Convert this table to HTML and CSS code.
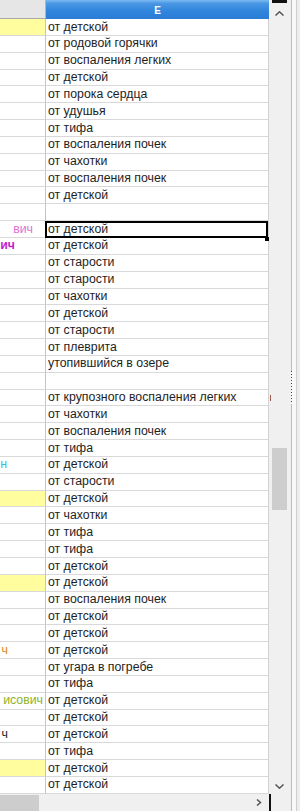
FILE: index.html
```html
<!DOCTYPE html>
<html lang="ru">
<head>
<meta charset="utf-8">
<title>Лист</title>
<link rel="stylesheet" href="styles.css">
</head>
<body>
<div class="main">
  <div class="head">
    <div class="head-d"></div>
    <div class="head-e">E</div>
  </div>
  <div class="rows">
    <div class="row"><div class="d y"></div><div class="e">от детской</div></div>
    <div class="row"><div class="d"></div><div class="e">от родовой горячки</div></div>
    <div class="row"><div class="d"></div><div class="e">от воспаления легких</div></div>
    <div class="row"><div class="d"></div><div class="e">от детской</div></div>
    <div class="row"><div class="d"></div><div class="e">от порока сердца</div></div>
    <div class="row"><div class="d"></div><div class="e">от удушья</div></div>
    <div class="row"><div class="d"></div><div class="e">от тифа</div></div>
    <div class="row"><div class="d"></div><div class="e">от воспаления почек</div></div>
    <div class="row"><div class="d"></div><div class="e">от чахотки</div></div>
    <div class="row"><div class="d"></div><div class="e">от воспаления почек</div></div>
    <div class="row"><div class="d"></div><div class="e">от детской</div></div>
    <div class="row"><div class="d"></div><div class="e"></div></div>
    <div class="row"><div class="d"><span class="n pink">вич</span></div><div class="e sel">от детской</div></div>
    <div class="row"><div class="d"><span class="n magenta">ич</span></div><div class="e">от детской</div></div>
    <div class="row"><div class="d"></div><div class="e">от старости</div></div>
    <div class="row"><div class="d"></div><div class="e">от старости</div></div>
    <div class="row"><div class="d"></div><div class="e">от чахотки</div></div>
    <div class="row"><div class="d"></div><div class="e">от детской</div></div>
    <div class="row"><div class="d"></div><div class="e">от старости</div></div>
    <div class="row"><div class="d"></div><div class="e">от плеврита</div></div>
    <div class="row"><div class="d"></div><div class="e">утопившийся в озере</div></div>
    <div class="row"><div class="d"></div><div class="e"></div></div>
    <div class="row"><div class="d"></div><div class="e">от крупозного воспаления легких<span class="mark"></span></div></div>
    <div class="row"><div class="d"></div><div class="e">от чахотки</div></div>
    <div class="row"><div class="d"></div><div class="e">от воспаления почек</div></div>
    <div class="row"><div class="d"></div><div class="e">от тифа</div></div>
    <div class="row"><div class="d"><span class="n cyan">н</span></div><div class="e">от детской</div></div>
    <div class="row"><div class="d"></div><div class="e">от старости</div></div>
    <div class="row"><div class="d y"></div><div class="e">от детской</div></div>
    <div class="row"><div class="d"></div><div class="e">от чахотки</div></div>
    <div class="row"><div class="d"></div><div class="e">от тифа</div></div>
    <div class="row"><div class="d"></div><div class="e">от тифа</div></div>
    <div class="row"><div class="d"></div><div class="e">от детской</div></div>
    <div class="row"><div class="d y"></div><div class="e">от детской</div></div>
    <div class="row"><div class="d"></div><div class="e">от воспаления почек</div></div>
    <div class="row"><div class="d"></div><div class="e">от детской</div></div>
    <div class="row"><div class="d"></div><div class="e">от детской</div></div>
    <div class="row"><div class="d"><span class="n orange">ч</span></div><div class="e">от детской</div></div>
    <div class="row"><div class="d"></div><div class="e">от угара в погребе</div></div>
    <div class="row"><div class="d"></div><div class="e">от тифа</div></div>
    <div class="row"><div class="d"><span class="n olive">исович</span></div><div class="e">от детской</div></div>
    <div class="row"><div class="d"></div><div class="e">от детской</div></div>
    <div class="row"><div class="d"><span class="n black">ч</span></div><div class="e">от детской</div></div>
    <div class="row"><div class="d"></div><div class="e">от тифа</div></div>
    <div class="row"><div class="d y"></div><div class="e">от детской</div></div>
    <div class="row"><div class="d"></div><div class="e">от детской</div></div>
  </div>
  <div class="hscroll">
    <div class="hthumb"></div>
    <svg class="harrow" width="6" height="7" viewBox="0 0 6 7"><path d="M1 0.5 L4.5 3.5 L1 6.5" fill="none" stroke="#555" stroke-width="1.5"/></svg>
  </div>
</div>
<div class="vscroll">
  <div class="vtop"></div>
  <div class="vbtn up"><svg width="9" height="5" viewBox="0 0 9 5"><path d="M0.5 4.5 L4.5 0.8 L8.5 4.5" fill="none" stroke="#555" stroke-width="1.5"/></svg></div>
  <div class="track"><div class="vthumb"></div></div>
  <div class="vbtn down"><svg width="9" height="5" viewBox="0 0 9 5"><path d="M0.5 0.5 L4.5 4.2 L8.5 0.5" fill="none" stroke="#555" stroke-width="1.5"/></svg></div>
  <div class="corner"></div>
</div>
<div class="edge">
  <div class="grip"></div>
</div>
</body>
</html>
```
FILE: styles.css
```css
* { box-sizing: border-box; margin: 0; padding: 0; }
html, body { width: 300px; height: 811px; overflow: hidden; background: #fff; }
body {
  display: flex;
  font-family: "Liberation Sans", Arial, sans-serif;
  color: #222;
}
.main { width: 269px; display: flex; flex-direction: column; flex: none; }
.head { display: flex; height: 19px; flex: none; }
.head-d {
  width: 46px;
  background: #e6e6e6;
  border-right: 1px solid #b5b5b5;
  border-bottom: 1px solid #a8a8a8;
}
.head-e {
  width: 223px;
  background: linear-gradient(#7cbbf1 0, #4a97e4 18%, #2f84db 60%, #2a7dd6 100%);
  color: #fff;
  font-weight: bold;
  font-size: 10px;
  display: flex;
  align-items: center;
  justify-content: center;
  padding-top: 2px;
}
.rows { display: flex; flex-direction: column; flex: none; }
.row { display: flex; height: 16.85px; flex: none; }
.d, .e {
  font-size: 12.3px;
  line-height: 15.85px;
  white-space: nowrap;
  border-bottom: 1px solid #d9d9d9;
}
.d {
  width: 46px;
  border-right: 1px solid #c4c4c4;
  overflow: hidden;
  display: flex;
  justify-content: flex-end;
}
.e {
  width: 223px;
  border-right: 1px solid #d2d2d2;
  padding-left: 2px;
  padding-top: 0.5px;
  position: relative;
  color: #1e1e1e;
}
.y { background: #fffd9e; }
.n { flex: none; padding-top: 0.5px; }
.pink { color: #e070d6; margin-right: 12px; }
.magenta { color: #c41ec8; font-weight: bold; margin-right: 30px; }
.cyan { color: #2ec3df; margin-right: 38px; }
.orange { color: #e0851c; margin-right: 37px; }
.olive { color: #8db22a; margin-right: 2px; }
.black { color: #222; margin-right: 37px; }
.sel::after {
  content: "";
  position: absolute;
  left: -1px; top: 0; right: 0; bottom: -1px;
  border: 2px solid #000;
}
.sel::before {
  content: "";
  position: absolute;
  right: -1px; bottom: -4px;
  width: 4px; height: 4px;
  background: #000;
  z-index: 1;
}
.mark {
  position: absolute;
  right: -3px; top: 5px;
  width: 1px; height: 6px;
  background: #9c5a4a;
}
.hscroll {
  height: 17px;
  flex: none;
  display: flex;
  align-items: center;
  background: #f0f0f0;
}
.hthumb { width: 39px; align-self: stretch; margin-top: 1px; background: #cdcdcd; }
.harrow { margin-left: auto; margin-right: 7px; margin-top: 1px; }
.vscroll {
  width: 21px;
  flex: none;
  display: flex;
  flex-direction: column;
  background: #f0f0f0;
}
.vtop { height: 3px; background: #111; margin: 0 3px; flex: none; }
.vbtn { height: 17px; flex: none; display: flex; justify-content: center; }
.up { padding-top: 8px; }
.down { padding-top: 7px; }
.track { flex: 1; }
.vthumb { margin: 428px 3px 0 3px; height: 62px; background: #cdcdcd; }
.corner { height: 17px; flex: none; border-left: 2px solid #111; }
.edge {
  width: 10px;
  flex: none;
  background: linear-gradient(to right, #f0f0f0 0 1px, #bcbcbc 1px 2px, #f8f8f8 2px 6px, #cfcfcf 6px 7px, #ececec 7px);
}
.grip {
  margin: 371px 0 0 1px;
  width: 1px;
  height: 33px;
  background: repeating-linear-gradient(#444 0 1px, #f8f8f8 1px 3px);
}
```
